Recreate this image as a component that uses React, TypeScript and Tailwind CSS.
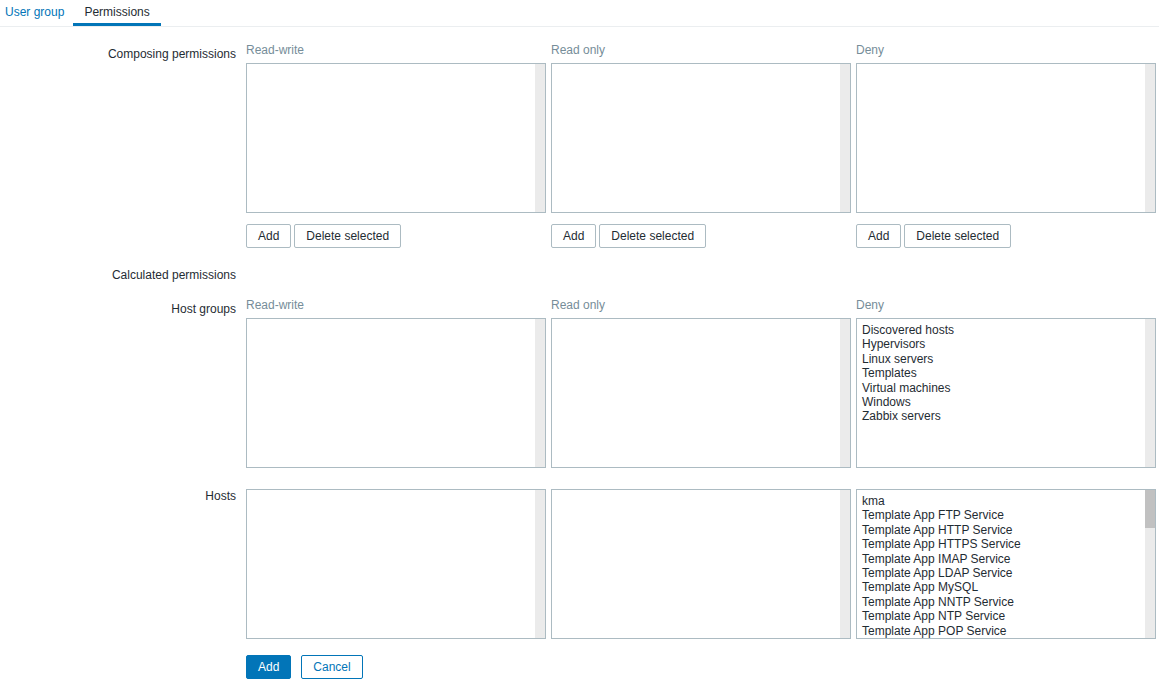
import React from "react";

const hostGroups = [
  "Discovered hosts",
  "Hypervisors",
  "Linux servers",
  "Templates",
  "Virtual machines",
  "Windows",
  "Zabbix servers",
];

const hosts = [
  "kma",
  "Template App FTP Service",
  "Template App HTTP Service",
  "Template App HTTPS Service",
  "Template App IMAP Service",
  "Template App LDAP Service",
  "Template App MySQL",
  "Template App NNTP Service",
  "Template App NTP Service",
  "Template App POP Service",
];

interface ListBoxProps {
  items?: string[];
  thumb?: boolean;
}

const ListBox: React.FC<ListBoxProps> = ({ items = [], thumb = false }) => (
  <div className="flex h-[150px] w-[300px] border border-[#acbbc2] bg-white overflow-hidden">
    <div className="flex-1 pt-[4px] pl-[5px] overflow-hidden">
      {items.map((item) => (
        <div key={item} className="leading-[14.4px] whitespace-nowrap text-[#1f2c33]">
          {item}
        </div>
      ))}
    </div>
    <div className="w-[10px] bg-[#ebebeb] flex flex-col">
      {thumb && <div className="h-[38px] bg-[#c1c1c1]" />}
    </div>
  </div>
);

const Btn: React.FC<{ label: string }> = ({ label }) => (
  <button className="h-[24px] px-[11px] border border-[#acbbc2] rounded-[2px] bg-white text-[#1f2c33] leading-[14px]">
    {label}
  </button>
);

const Column: React.FC<{ title?: string; items?: string[]; thumb?: boolean; buttons?: boolean }> = ({
  title,
  items,
  thumb,
  buttons,
}) => (
  <div className="flex flex-col">
    {title && <div className="h-[20px] leading-[14px] text-[#768d99]">{title}</div>}
    <ListBox items={items} thumb={thumb} />
    {buttons && (
      <div className="flex gap-[3px] mt-[11px]">
        <Btn label="Add" />
        <Btn label="Delete selected" />
      </div>
    )}
  </div>
);

const Row: React.FC<{ label: string; labelClass?: string; className?: string; children?: React.ReactNode }> = ({
  label,
  labelClass = "",
  className = "",
  children,
}) => (
  <div className={`flex ${className}`}>
    <div className={`w-[246px] shrink-0 pr-[10px] text-right leading-[14px] text-[#1f2c33] ${labelClass}`}>
      {label}
    </div>
    <div className="flex-1">{children}</div>
  </div>
);

export default function App() {
  return (
    <div className="w-[1159px] h-[684px] bg-white text-[12px] font-['Liberation_Sans',Arial,sans-serif] overflow-hidden">
      <div className="flex border-b border-[#ebeef0] h-[27px]">
        <div className="h-[26px] pl-[5px] pr-[9px] flex items-center pb-[3px] text-[#0275b8]">User group</div>
        <div className="h-[26px] px-[11px] flex items-center border-b-[3px] border-[#0275b8] text-[#1f2c33]">
          Permissions
        </div>
      </div>

      <Row label="Composing permissions" labelClass="pt-[4px]" className="mt-[16px]">
        <div className="flex gap-[5px]">
          <Column title="Read-write" buttons />
          <Column title="Read only" buttons />
          <Column title="Deny" buttons />
        </div>
      </Row>

      <Row label="Calculated permissions" className="mt-[20px]" />

      <Row label="Host groups" labelClass="pt-[4px]" className="mt-[16px]">
        <div className="flex gap-[5px]">
          <Column title="Read-write" />
          <Column title="Read only" />
          <Column title="Deny" items={hostGroups} />
        </div>
      </Row>

      <Row label="Hosts" className="mt-[21px]">
        <div className="flex gap-[5px]">
          <Column />
          <Column />
          <Column items={hosts} thumb />
        </div>
      </Row>

      <Row label="" className="mt-[16px]">
        <div className="flex gap-[10px]">
          <button className="h-[24px] px-[11px] rounded-[2px] bg-[#0275b8] border border-[#0275b8] text-white leading-[14px]">
            Add
          </button>
          <button className="h-[24px] px-[11px] rounded-[2px] bg-white border border-[#0275b8] text-[#0275b8] leading-[14px]">
            Cancel
          </button>
        </div>
      </Row>
    </div>
  );
}
